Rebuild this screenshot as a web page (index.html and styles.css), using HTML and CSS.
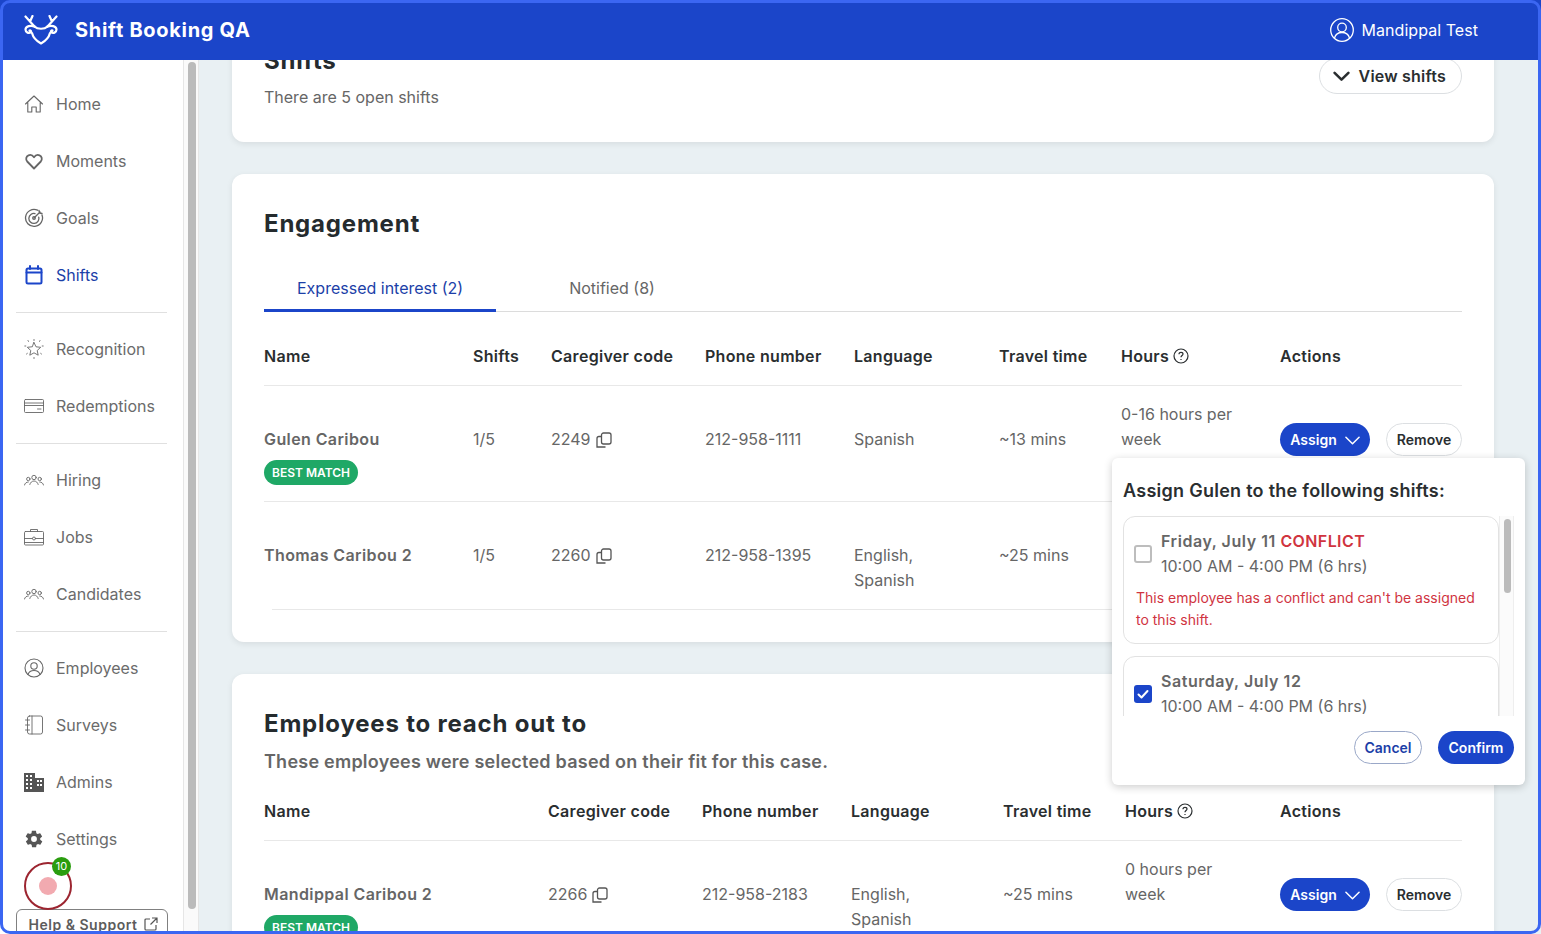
FILE: index.html
```html
<!DOCTYPE html>
<html lang="en">
<head>
    <meta charset="UTF-8">
    <title>Shift Booking QA</title>
    <link rel="stylesheet" href="styles.css">
</head>
<body>
    <div class="app">
        <header class="topbar">
            <div class="brand">
                <svg class="brand-logo" viewBox="0 0 34 30" fill="none" stroke="#fff" stroke-width="2.2" stroke-linecap="round" stroke-linejoin="round">
                    <path d="M1.500 1.500l9 10 M8.500 1L6.500 5.500 M32.500 1.500l-9 10 M25.500 1L27.500 5.500"/>
                    <path d="M10.500 11.500c-3.500-1.500-9-.5-9 3 0 3 3.500 4.500 5.500 2.500 .5-1-.5-2-1.500-1.500"/>
                    <path d="M23.500 11.500c3.500-1.500 9-.5 9 3 0 3-3.500 4.500-5.500 2.500-.5-1 .5-2 1.500-1.500"/>
                    <path d="M10.500 11.500c3 3 10 3 13 0"/>
                    <path d="M8 18c1 4 4.500 8 9 10.500 4.500-2.500 8-6.500 9-10.500"/>
                </svg>
                <span class="brand-name">Shift Booking QA</span>
            </div>
            <div class="user">
                <svg class="user-icon" viewBox="0 0 24 24" fill="none" stroke="#fff" stroke-width="1.300">
                    <circle cx="12" cy="12" r="11.300"/>
                    <circle cx="12" cy="9.500" r="4.300"/>
                    <path d="M4.500 20c1-3.500 4-5.500 7.500-5.500s6.500 2 7.500 5.500"/>
                </svg>
                <span>Mandippal Test</span>
            </div>
        </header>

        <div class="layout">
            <aside class="sidebar">
                <div class="sidebar-inner">
                    <nav class="nav">
                        <a class="nav-item">
                            <svg class="nav-icon" viewBox="0 0 20 20"><path d="M1.500 10L10 2l8.500 8M3.800 8.500V18h4v-5h4.400v5h4V8.500"/></svg>
                            Home
                        </a>
                        <a class="nav-item">
                            <svg class="nav-icon icon-bold" viewBox="0 0 20 20"><path d="M10 17.500L3.200 10.500C1.500 8.500 2 5.300 4.500 4.300c2.200-.9 4.300.2 5.500 2 1.200-1.800 3.300-2.900 5.500-2 2.500 1 3 4.200 1.300 6.200z"/></svg>
                            Moments
                        </a>
                        <a class="nav-item">
                            <svg class="nav-icon icon-mid" viewBox="0 0 20 20"><path d="M13.500 2.200A8.500 8.500 0 1 0 18 7M11 5.600a5 5 0 1 0 3.700 3.600M10 10l6-6M15 2.500l.5 2.500 2.500.5"/><circle cx="10" cy="10" r="1.300"/></svg>
                            Goals
                        </a>
                        <a class="nav-item active">
                            <svg class="nav-icon icon-active" viewBox="0 0 20 20"><rect x="2.500" y="3.500" width="15" height="15" rx="1.500"/><path d="M2.500 7.500h15M6 1v3M14 1v3"/></svg>
                            Shifts
                        </a>
                    </nav>
                    <div class="nav-divider"></div>
                    <nav class="nav">
                        <a class="nav-item">
                            <svg class="nav-icon icon-thin" viewBox="0 0 20 20"><path d="M10 3.500l2 4.300 4.700.5-3.500 3.200 1 4.700-4.200-2.400-4.200 2.400 1-4.700-3.500-3.200 4.700-.5z"/><path d="M10 .5v1M.8 7h1M18.200 7h1M4 1.500l.5 1M16 1.500l-.5 1M2.500 15l.8-.6M17.500 15l-.8-.6M10 18.500v1" stroke-dasharray="1 1"/></svg>
                            Recognition
                        </a>
                        <a class="nav-item">
                            <svg class="nav-icon icon-thin" viewBox="0 0 20 20"><rect x=".5" y="3.500" width="19" height="13" rx="1"/><path d="M.5 7h19M.5 9.500h19M13.500 13h3.500"/></svg>
                            Redemptions
                        </a>
                    </nav>
                    <div class="nav-divider"></div>
                    <nav class="nav">
                        <a class="nav-item">
                            <svg class="nav-icon icon-thin" viewBox="0 0 20 20"><circle cx="10" cy="7.500" r="2.200"/><circle cx="4.300" cy="9" r="1.700"/><circle cx="15.700" cy="9" r="1.700"/><path d="M5.800 14.500c.5-2 2.200-3.500 4.200-3.500s3.700 1.500 4.200 3.500M.5 15c.3-1.800 2-3 3.800-3M19.500 15c-.3-1.800-2-3-3.800-3"/></svg>
                            Hiring
                        </a>
                        <a class="nav-item">
                            <svg class="nav-icon icon-thin" viewBox="0 0 20 20"><rect x=".5" y="4.500" width="19" height="13.500" rx="1"/><path d="M6.500 4.500V2.500h7v2M.5 11.500h7.800M11.700 11.500h7.800M.5 15.500h19"/><circle cx="10" cy="11.500" r="1.500"/></svg>
                            Jobs
                        </a>
                        <a class="nav-item">
                            <svg class="nav-icon icon-thin" viewBox="0 0 20 20"><circle cx="10" cy="7.500" r="2.200"/><circle cx="4.300" cy="9" r="1.700"/><circle cx="15.700" cy="9" r="1.700"/><path d="M5.800 14.500c.5-2 2.200-3.500 4.200-3.500s3.700 1.500 4.200 3.500M.5 15c.3-1.800 2-3 3.800-3M19.500 15c-.3-1.800-2-3-3.800-3"/></svg>
                            Candidates
                        </a>
                    </nav>
                    <div class="nav-divider"></div>
                    <nav class="nav">
                        <a class="nav-item">
                            <svg class="nav-icon" viewBox="0 0 20 20"><circle cx="10" cy="10" r="9"/><circle cx="10" cy="8" r="3.200"/><path d="M4 16.500c.8-2.500 3.200-4 6-4s5.200 1.500 6 4"/></svg>
                            Employees
                        </a>
                        <a class="nav-item">
                            <svg class="nav-icon icon-thin" viewBox="0 0 20 20"><rect x="3.500" y="1" width="15" height="18" rx="2"/><path d="M8 1v18M1.500 5h4M1.500 10h4M1.500 15h4"/></svg>
                            Surveys
                        </a>
                        <a class="nav-item">
                            <svg class="nav-icon icon-fill" viewBox="0 0 20 20"><path fill-rule="evenodd" d="M0 1h11v5h9v14H0zM2 3v2h2V3zm4 0v2h2V3zM2 7v2h2V7zm4 0v2h2V7zM2 11v2h2v-2zm4 0v2h2v-2zM2 15v2h2v-2zm4 0v2h2v-2zm7-7v2h2V8zm0 4v2h2v-2zm3-4v2h2V8zm0 4v2h2v-2z"/></svg>
                            Admins
                        </a>
                        <a class="nav-item">
                            <svg class="nav-icon icon-fill" viewBox="0 0 24 24"><path fill-rule="evenodd" d="M19.400 13c.1-.3.100-.7.100-1s0-.7-.1-1l2.100-1.600c.2-.2.200-.4.100-.6l-2-3.500c-.1-.2-.4-.3-.6-.2l-2.500 1c-.5-.4-1.100-.7-1.700-1l-.4-2.600c0-.3-.2-.5-.5-.5h-4c-.3 0-.5.200-.5.400l-.4 2.700c-.6.200-1.100.6-1.700 1l-2.500-1c-.2-.1-.5 0-.6.200l-2 3.500c-.1.200-.1.500.1.600L4.600 11c0 .3-.1.700-.1 1s0 .7.100 1l-2.100 1.600c-.2.200-.2.400-.1.600l2 3.500c.1.200.4.300.6.200l2.500-1c.5.400 1.100.7 1.700 1l.4 2.600c0 .3.200.5.500.5h4c.3 0 .5-.2.500-.4l.4-2.700c.6-.2 1.100-.6 1.700-1l2.500 1c.2.100.5 0 .6-.2l2-3.500c.1-.2.100-.5-.1-.6zM12 15.500a3.500 3.500 0 1 1 0-7 3.500 3.500 0 0 1 0 7z"/></svg>
                            Settings
                        </a>
                    </nav>
                    <button class="help-btn">
                        Help &amp; Support
                        <svg class="help-icon" viewBox="0 0 14 14" fill="none" stroke="#555" stroke-width="1.200"><path d="M6 2H2a1 1 0 0 0-1 1v9a1 1 0 0 0 1 1h9a1 1 0 0 0 1-1V8M8 1h5v5M13 1L6.500 7.500"/></svg>
                    </button>
                    <div class="recorder">
                        <span class="recorder-dot"></span>
                        <span class="recorder-badge">10</span>
                    </div>
                </div>
                <div class="side-scroll"><div class="side-thumb"></div></div>
            </aside>

            <main class="main">
                <div class="content">
                    <section class="card card-shifts">
                        <div>
                            <h2 class="card-title">Shifts</h2>
                            <p class="card-desc">There are 5 open shifts</p>
                        </div>
                        <button class="view-btn">
                            <svg class="view-chevron" viewBox="0 0 16 10" fill="none" stroke="#2a2e30" stroke-width="2.400" stroke-linecap="round" stroke-linejoin="round"><path d="M1.500 1.500L8 8l6.500-6.500"/></svg>
                            View shifts
                        </button>
                    </section>

                    <section class="card card-engagement">
                        <h2 class="card-title">Engagement</h2>
                        <div class="tabs">
                            <div class="tab tab-active">Expressed interest (2)</div>
                            <div class="tab">Notified (8)</div>
                        </div>
                        <table class="data-table">
                            <colgroup>
                                <col class="w-209"><col class="w-78"><col class="w-154"><col class="w-149"><col class="w-145"><col class="w-122"><col class="w-159"><col class="w-182">
                            </colgroup>
                            <thead>
                                <tr>
                                    <th>Name</th><th>Shifts</th><th>Caregiver code</th><th>Phone number</th><th>Language</th><th>Travel time</th>
                                    <th><span class="th-help">Hours <svg class="help-circle" viewBox="0 0 16 16" fill="none" stroke="#2a2e30" stroke-width="1.200"><circle cx="8" cy="8" r="7"/><path d="M6 6.300C6 5 7 4.300 8 4.300c1.200 0 2 .8 2 1.800 0 1.500-2 1.500-2 3.200M8 11v1"/></svg></span></th>
                                    <th>Actions</th>
                                </tr>
                            </thead>
                            <tbody>
                                <tr>
                                    <td><span class="person">Gulen Caribou</span><span class="badge">BEST MATCH</span></td>
                                    <td>1/5</td>
                                    <td><span class="code">2249 <svg class="copy-icon" viewBox="0 0 16 16" fill="none" stroke="#555" stroke-width="1.300"><rect x="5.500" y="1" width="9.500" height="11" rx="2"/><path d="M5 4.500H3a2 2 0 0 0-2 2V15h8.500"/></svg></span></td>
                                    <td>212-958-1111</td>
                                    <td>Spanish</td>
                                    <td>~13 mins</td>
                                    <td class="cell-hours">0-16 hours per week</td>
                                    <td class="cell-actions">
                                        <div class="actions">
                                            <button class="assign-btn">Assign <svg class="assign-chevron" viewBox="0 0 16 9" fill="none" stroke="#fff" stroke-width="1.600" stroke-linecap="round" stroke-linejoin="round"><path d="M1 1l7 7 7-7"/></svg></button>
                                            <button class="remove-btn">Remove</button>
                                        </div>
                                    </td>
                                </tr>
                                <tr class="row-last">
                                    <td><span class="person">Thomas Caribou 2</span></td>
                                    <td>1/5</td>
                                    <td><span class="code">2260 <svg class="copy-icon" viewBox="0 0 16 16" fill="none" stroke="#555" stroke-width="1.300"><rect x="5.500" y="1" width="9.500" height="11" rx="2"/><path d="M5 4.500H3a2 2 0 0 0-2 2V15h8.500"/></svg></span></td>
                                    <td>212-958-1395</td>
                                    <td>English,<br>Spanish</td>
                                    <td>~25 mins</td>
                                    <td></td>
                                    <td></td>
                                </tr>
                            </tbody>
                        </table>

                        <div class="popover">
                            <div class="popover-title">Assign Gulen to the following shifts:</div>
                            <div class="popover-body">
                                <div class="shift-list">
                                    <div class="shift-item">
                                        <div class="shift-row">
                                            <span class="checkbox"></span>
                                            <div>
                                                <div class="shift-date">Friday, July 11 <span class="conflict">CONFLICT</span></div>
                                                <div class="shift-time">10:00 AM - 4:00 PM (6 hrs)</div>
                                            </div>
                                        </div>
                                        <p class="shift-error">This employee has a conflict and can't be assigned to this shift.</p>
                                    </div>
                                    <div class="shift-item">
                                        <div class="shift-row">
                                            <span class="checkbox checked">
                                                <svg viewBox="0 0 18 18" fill="none" stroke="#fff" stroke-width="2" stroke-linecap="round" stroke-linejoin="round"><path d="M4.500 9.500l3 3 6-6.500"/></svg>
                                            </span>
                                            <div>
                                                <div class="shift-date">Saturday, July 12</div>
                                                <div class="shift-time">10:00 AM - 4:00 PM (6 hrs)</div>
                                            </div>
                                        </div>
                                    </div>
                                </div>
                                <div class="list-scroll"><div class="list-thumb"></div></div>
                            </div>
                            <div class="popover-actions">
                                <button class="cancel-btn">Cancel</button>
                                <button class="confirm-btn">Confirm</button>
                            </div>
                        </div>
                    </section>

                    <section class="card card-employees">
                        <h2 class="card-title">Employees to reach out to</h2>
                        <p class="card-sub">These employees were selected based on their fit for this case.</p>
                        <table class="data-table table-employees">
                            <colgroup>
                                <col class="w-284"><col class="w-154"><col class="w-149"><col class="w-152"><col class="w-122"><col class="w-155"><col class="w-182">
                            </colgroup>
                            <thead>
                                <tr>
                                    <th>Name</th><th>Caregiver code</th><th>Phone number</th><th>Language</th><th>Travel time</th>
                                    <th><span class="th-help">Hours <svg class="help-circle" viewBox="0 0 16 16" fill="none" stroke="#2a2e30" stroke-width="1.200"><circle cx="8" cy="8" r="7"/><path d="M6 6.300C6 5 7 4.300 8 4.300c1.200 0 2 .8 2 1.800 0 1.500-2 1.500-2 3.200M8 11v1"/></svg></span></th>
                                    <th>Actions</th>
                                </tr>
                            </thead>
                            <tbody>
                                <tr>
                                    <td><span class="person">Mandippal Caribou 2</span><span class="badge">BEST MATCH</span></td>
                                    <td><span class="code">2266 <svg class="copy-icon" viewBox="0 0 16 16" fill="none" stroke="#555" stroke-width="1.300"><rect x="5.500" y="1" width="9.500" height="11" rx="2"/><path d="M5 4.500H3a2 2 0 0 0-2 2V15h8.500"/></svg></span></td>
                                    <td>212-958-2183</td>
                                    <td>English,<br>Spanish</td>
                                    <td>~25 mins</td>
                                    <td class="cell-hours">0 hours per week</td>
                                    <td class="cell-actions">
                                        <div class="actions">
                                            <button class="assign-btn">Assign <svg class="assign-chevron" viewBox="0 0 16 9" fill="none" stroke="#fff" stroke-width="1.600" stroke-linecap="round" stroke-linejoin="round"><path d="M1 1l7 7 7-7"/></svg></button>
                                            <button class="remove-btn">Remove</button>
                                        </div>
                                    </td>
                                </tr>
                            </tbody>
                        </table>
                    </section>
                </div>
            </main>
        </div>
        <div class="window-frame"></div>
    </div>
</body>
</html>
```

FILE: styles.css
```css
* {
    margin: 0;
    padding: 0;
    box-sizing: border-box;
}

html, body {
    height: 100%;
    overflow: hidden;
}

body {
    font-family: Inter, 'Liberation Sans', sans-serif;
    font-size: 16px;
    color: #666;
    background: #fff;
}

button {
    font-family: inherit;
    cursor: pointer;
}

.app {
    position: relative;
    height: 934px;
    display: flex;
    flex-direction: column;
    overflow: hidden;
}

.window-frame {
    position: absolute;
    inset: 0;
    border: 3px solid #3b66f2;
    border-radius: 10px;
    pointer-events: none;
    z-index: 30;
}

/* top bar */
.topbar {
    height: 60px;
    flex: none;
    background: #1b45c9;
    color: #fff;
    display: flex;
    align-items: center;
    justify-content: space-between;
    padding: 0 63px 0 24px;
    position: relative;
    z-index: 10;
}

.brand {
    display: flex;
    align-items: center;
    gap: 17px;
}

.brand-logo {
    width: 34px;
    height: 30px;
}

.brand-name {
    font-size: 20px;
    font-weight: 700;
    letter-spacing: 0.7px;
}

.user {
    display: flex;
    align-items: center;
    gap: 8px;
    letter-spacing: 0.05px;
}

.user-icon {
    width: 24px;
    height: 24px;
}

/* sidebar */
.layout {
    flex: 1;
    display: flex;
    min-height: 0;
}

.sidebar {
    width: 199px;
    flex: none;
    display: flex;
    background: #fff;
}

.sidebar-inner {
    width: 184px;
    padding: 15px 16px 0;
    border-right: 1px solid #e6e6e6;
    position: relative;
}

.nav {
    display: flex;
    flex-direction: column;
}

.nav-item {
    height: 57px;
    display: flex;
    align-items: center;
    gap: 12px;
    padding-left: 8px;
    color: #6b6b6b;
}

.nav-item.active {
    color: #1c3fa8;
}

.nav-icon {
    width: 20px;
    height: 20px;
    flex: none;
    fill: none;
    stroke: #666;
    stroke-width: 1.100;
    stroke-linecap: round;
    stroke-linejoin: round;
}

.icon-bold {
    stroke-width: 1.800;
}

.icon-mid {
    stroke-width: 1.300;
}

.icon-thin {
    stroke: #666;
    stroke-width: 0.900;
}

.icon-active {
    stroke: #1b45c9;
    stroke-width: 2;
}

.icon-fill {
    fill: #555;
    stroke: none;
}

.nav-divider {
    height: 1px;
    margin: 9px 0 7px;
    background: #e0e0e0;
}

.help-btn {
    width: 152px;
    height: 30px;
    margin-top: 42px;
    padding-left: 3px;
    display: flex;
    align-items: center;
    justify-content: center;
    gap: 7px;
    background: #fff;
    border: 1px solid #808080;
    border-radius: 6px;
    font-size: 14px;
    font-weight: 600;
    color: #5c5c5c;
    letter-spacing: 0.5px;
}

.help-icon {
    width: 14px;
    height: 14px;
}

.recorder {
    position: absolute;
    left: 24px;
    top: 802px;
    width: 48px;
    height: 48px;
    border: 2px solid #9c2530;
    border-radius: 50%;
    display: flex;
    align-items: center;
    justify-content: center;
}

.recorder-dot {
    width: 18px;
    height: 18px;
    border-radius: 50%;
    background: #f2aab0;
}

.recorder-badge {
    position: absolute;
    top: -7px;
    right: -1px;
    width: 19px;
    height: 19px;
    border-radius: 50%;
    background: #2a9d0f;
    color: #fff;
    font-size: 11px;
    line-height: 19px;
    text-align: center;
}

.side-scroll {
    width: 15px;
    border-right: 1px solid #e6e6e6;
    padding: 2px 0 0 4px;
    background: #fafafa;
}

.side-thumb {
    width: 8px;
    height: 847px;
    border-radius: 4px;
    background: #bbb;
}

/* main content */
.main {
    flex: 1;
    min-width: 0;
    overflow: hidden;
    background: #e9f0f3;
    padding: 0 47px 0 33px;
}

.content {
    margin-top: -47px;
    display: flex;
    flex-direction: column;
    gap: 32px;
}

.card {
    position: relative;
    background: #fff;
    border-radius: 12px;
    padding: 32px;
    box-shadow: 0 2px 6px rgba(0, 0, 0, 0.08);
}

.card-shifts {
    display: flex;
    justify-content: space-between;
    align-items: flex-start;
    padding-bottom: 33px;
}

.card-title {
    font-size: 24px;
    line-height: 36px;
    font-weight: 700;
    color: #252b2e;
    letter-spacing: 0.8px;
}

.card-shifts .card-title {
    line-height: 32px;
}

.card-desc {
    margin-top: 8px;
    line-height: 24px;
}

.card-sub {
    margin-top: 7px;
    font-size: 18px;
    line-height: 25px;
    font-weight: 600;
    color: #666;
    letter-spacing: 0.24px;
}

.view-btn {
    display: flex;
    align-items: center;
    gap: 9px;
    height: 36px;
    margin-top: 13px;
    padding: 0 15px 0 13px;
    background: #fff;
    border: 1px solid #dcdfe2;
    border-radius: 18px;
    font-size: 16px;
    font-weight: 600;
    color: #2a2e30;
    letter-spacing: 0.2px;
}

.view-chevron {
    width: 17px;
    height: 11px;
}

/* tabs */
.tabs {
    display: flex;
    gap: 40px;
    height: 48px;
    margin-top: 22px;
    border-bottom: 1px solid #dcdcdc;
}

.tab {
    padding: 12px 33px 0;
    height: 48px;
    line-height: 24px;
    color: #666;
}

.tab-active {
    color: #1c3fa8;
    border-bottom: 3px solid #1b45c9;
}

/* tables */
.data-table {
    width: 1198px;
    table-layout: fixed;
    border-collapse: collapse;
}

.w-78 { width: 78px; }
.w-122 { width: 122px; }
.w-145 { width: 145px; }
.w-149 { width: 149px; }
.w-152 { width: 152px; }
.w-154 { width: 154px; }
.w-155 { width: 155px; }
.w-159 { width: 159px; }
.w-182 { width: 182px; }
.w-209 { width: 209px; }
.w-284 { width: 284px; }

.data-table th {
    text-align: left;
    font-size: 16px;
    line-height: 24px;
    font-weight: 600;
    color: #2a2e30;
    letter-spacing: 0.3px;
    padding: 32px 0 17px;
    border-bottom: 1px solid #e8e8e8;
}

.table-employees th {
    padding-top: 25px;
}

.data-table td {
    vertical-align: top;
    line-height: 25px;
    padding: 41px 8px 15px 0;
    border-bottom: 1px solid #e8e8e8;
}

.data-table td.cell-hours {
    padding-top: 16px;
    padding-right: 24px;
}

.data-table td.cell-actions {
    padding: 37px 0 0;
}

.row-last td {
    padding-bottom: 16px;
}

.row-last td:first-child {
    border-bottom: none;
    background: linear-gradient(#e8e8e8, #e8e8e8) 8px bottom / 100% 1px no-repeat;
}

.person {
    display: block;
    font-weight: 600;
    color: #666;
    letter-spacing: 0.4px;
}

.badge {
    display: inline-block;
    margin: 8px 0 1px;
    height: 25px;
    padding: 0 8px;
    border-radius: 13px;
    background: #1fa866;
    color: #fff;
    font-size: 12px;
    line-height: 25px;
    font-weight: 600;
}

.th-help {
    display: flex;
    align-items: center;
    gap: 4px;
}

.help-circle {
    width: 16px;
    height: 16px;
}

.code {
    display: inline-flex;
    align-items: center;
    gap: 5px;
}

.copy-icon {
    width: 16px;
    height: 16px;
}

.actions {
    display: flex;
    gap: 16px;
}

.assign-btn {
    width: 90px;
    height: 33px;
    display: flex;
    align-items: center;
    justify-content: center;
    gap: 8px;
    background: #1b45c9;
    color: #fff;
    border: none;
    border-radius: 17px;
    font-size: 14px;
    font-weight: 600;
}

.assign-chevron {
    width: 15px;
    height: 9px;
    margin-top: 2px;
}

.remove-btn {
    width: 76px;
    height: 33px;
    background: #fff;
    color: #2a2e30;
    border: 1px solid #dcdfe2;
    border-radius: 17px;
    font-size: 14px;
    font-weight: 600;
}

/* assign popover */
.popover {
    position: absolute;
    left: 880px;
    top: 284px;
    width: 413px;
    height: 327px;
    padding: 21px 11px 0;
    background: #fff;
    border-radius: 6px;
    box-shadow: 0 2px 8px rgba(0, 0, 0, 0.2);
    z-index: 5;
}

.popover-title {
    font-size: 18px;
    line-height: 24px;
    font-weight: 600;
    color: #2a2e30;
    letter-spacing: 0.27px;
}

.popover-body {
    margin-top: 13px;
    height: 200px;
    display: flex;
    overflow: hidden;
}

.shift-list {
    width: 376px;
    display: flex;
    flex-direction: column;
    gap: 12px;
}

.shift-item {
    flex: none;
    padding: 12px 12px 12px 10px;
    border: 1px solid #e2e2e2;
    border-radius: 12px;
}

.shift-row {
    display: flex;
    align-items: center;
    gap: 9px;
    line-height: 25px;
}

.checkbox {
    width: 18px;
    height: 18px;
    flex: none;
    border: 2px solid #bdbdbd;
    border-radius: 3px;
    background: #fff;
}

.checkbox.checked {
    border: none;
    background: #1b45c9;
}

.checkbox svg {
    display: block;
}

.shift-date {
    font-weight: 600;
    color: #666;
    letter-spacing: 0.55px;
}

.conflict {
    color: #d0343f;
    letter-spacing: 0.4px;
}

.shift-error {
    margin: 8px 0 0 2px;
    font-size: 14px;
    line-height: 22px;
    color: #d0343f;
}

.list-scroll {
    width: 15px;
    padding: 3px 3px 0 4px;
    background: #fbfbfb;
    border-left: 1px solid #eee;
    border-right: 1px solid #eee;
}

.list-thumb {
    width: 7px;
    height: 74px;
    border-radius: 4px;
    background: #bbb;
}

.popover-actions {
    margin-top: 15px;
    display: flex;
    justify-content: flex-end;
    gap: 16px;
}

.cancel-btn {
    width: 68px;
    height: 33px;
    background: #fff;
    color: #1c3fa8;
    border: 1px solid #9aa8c8;
    border-radius: 17px;
    font-size: 14px;
    font-weight: 600;
}

.confirm-btn {
    width: 76px;
    height: 33px;
    background: #1b45c9;
    color: #fff;
    border: none;
    border-radius: 17px;
    font-size: 14px;
    font-weight: 600;
}
```
